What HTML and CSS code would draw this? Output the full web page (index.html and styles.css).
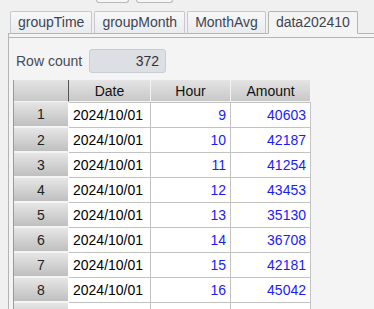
FILE: index.html
```html
<!DOCTYPE html>
<html>
<head>
  <title>data202410</title>
  <link rel="stylesheet" href="styles.css">
</head>
<body>
  <div class="toolbar">
    <span class="tool-btn btn-a"></span>
    <span class="tool-btn btn-b"></span>
  </div>
  <div class="tabs">
    <div class="tab">groupTime</div>
    <div class="tab">groupMonth</div>
    <div class="tab">MonthAvg</div>
    <div class="tab active">data202410</div>
  </div>
  <div class="panel">
    <div class="panel-body">
      <div class="count-row">
        <label for="row-count">Row count</label>
        <div class="count-box" id="row-count">372</div>
      </div>
      <table class="grid">
        <colgroup>
          <col class="col-head">
          <col class="col-date">
          <col class="col-num">
          <col class="col-num">
        </colgroup>
        <thead>
          <tr>
            <th class="corner"></th>
            <th>Date</th>
            <th>Hour</th>
            <th>Amount</th>
          </tr>
        </thead>
        <tbody>
          <tr><th>1</th><td>2024/10/01</td><td class="num">9</td><td class="num">40603</td></tr>
          <tr><th>2</th><td>2024/10/01</td><td class="num">10</td><td class="num">42187</td></tr>
          <tr><th>3</th><td>2024/10/01</td><td class="num">11</td><td class="num">41254</td></tr>
          <tr><th>4</th><td>2024/10/01</td><td class="num">12</td><td class="num">43453</td></tr>
          <tr><th>5</th><td>2024/10/01</td><td class="num">13</td><td class="num">35130</td></tr>
          <tr><th>6</th><td>2024/10/01</td><td class="num">14</td><td class="num">36708</td></tr>
          <tr><th>7</th><td>2024/10/01</td><td class="num">15</td><td class="num">42181</td></tr>
          <tr><th>8</th><td>2024/10/01</td><td class="num">16</td><td class="num">45042</td></tr>
          <tr><th></th><td></td><td class="num"></td><td class="num"></td></tr>
        </tbody>
      </table>
    </div>
  </div>
</body>
</html>
```

FILE: styles.css
```css
body {
  margin: 0;
  background-color: #f0f0f0;
  font-family: "Liberation Sans", Arial, sans-serif;
  font-size: 14px;
  height: 309px;
  overflow: hidden;
}

.toolbar {
  display: flex;
  height: 3px;
  padding-left: 96px;
  gap: 7px;
}

.tool-btn {
  display: block;
  height: 2px;
  background-color: #f6f6f6;
  border: 1px solid #b9b9b9;
  border-top: none;
  border-radius: 0 0 3px 3px;
}

.btn-a {
  width: 31px;
}

.btn-b {
  width: 35px;
}

.tabs {
  display: flex;
  gap: 2px;
  margin: 8px 0 0 8px;
  padding-left: 2px;
  border-bottom: 1px solid #b4b4b4;
}

.tab {
  height: 21px;
  line-height: 21px;
  padding: 0 7px;
  margin-bottom: -1px;
  color: #3d4452;
  background: linear-gradient(#f7f8f9, #e9ebee);
  border: 1px solid #c6c8cc;
  border-bottom: 1px solid #b4b4b4;
  border-radius: 2px 2px 0 0;
}

.tab.active {
  background: #f4f4f4;
  border-color: #b4b4b4;
  border-bottom-color: #f4f4f4;
}

.panel {
  margin-left: 8px;
  padding-top: 3px;
  background-color: #f4f4f4;
  border-left: 1px solid #b4b4b4;
  height: 300px;
}

.panel-body {
  border-top: 1px solid #b4b4b4;
  padding: 11px 0 0 4px;
}

.count-row {
  display: flex;
  align-items: center;
  gap: 7px;
  padding-left: 3px;
}

.count-row label {
  color: #444b57;
  width: 66px;
  white-space: nowrap;
}

.count-box {
  width: 69px;
  height: 22px;
  line-height: 22px;
  padding-right: 6px;
  text-align: right;
  color: #333;
  background-color: #dcdfe4;
  border: 1px solid #c9ccd1;
  border-radius: 3px;
}

.grid {
  margin-top: 7px;
  border-collapse: separate;
  border-spacing: 0;
  table-layout: fixed;
  width: 298px;
  border-left: 1px solid #9a9a9a;
}

.col-head {
  width: 55px;
}

.col-date {
  width: 82px;
}

.col-num {
  width: 80px;
}

.grid thead th {
  height: 21px;
  padding: 0;
  font-weight: normal;
  color: #111;
  background: linear-gradient(#e4e4e4, #c8c8c8);
  border-right: 1px solid #f4f4f4;
  border-bottom: 1px solid #f4f4f4;
}

.grid thead th.corner {
  border-right: 1px solid #555;
}

.grid tbody th {
  height: 23px;
  padding: 0;
  font-weight: normal;
  color: #222;
  background: linear-gradient(#e6e6e6, #bfbfbf);
  border-bottom: 2px solid #f4f4f4;
  border-right: 1px solid #fff;
}

.grid td {
  height: 24px;
  padding: 0 4px;
  background-color: #fff;
  color: #000;
  border-right: 1px solid #c3c3c3;
  border-bottom: 1px solid #c3c3c3;
  white-space: nowrap;
  overflow: hidden;
}

.grid tbody tr:first-child td {
  border-top: 1px solid #c3c3c3;
}

.grid td.num {
  text-align: right;
  color: #1a1aff;
}
```
